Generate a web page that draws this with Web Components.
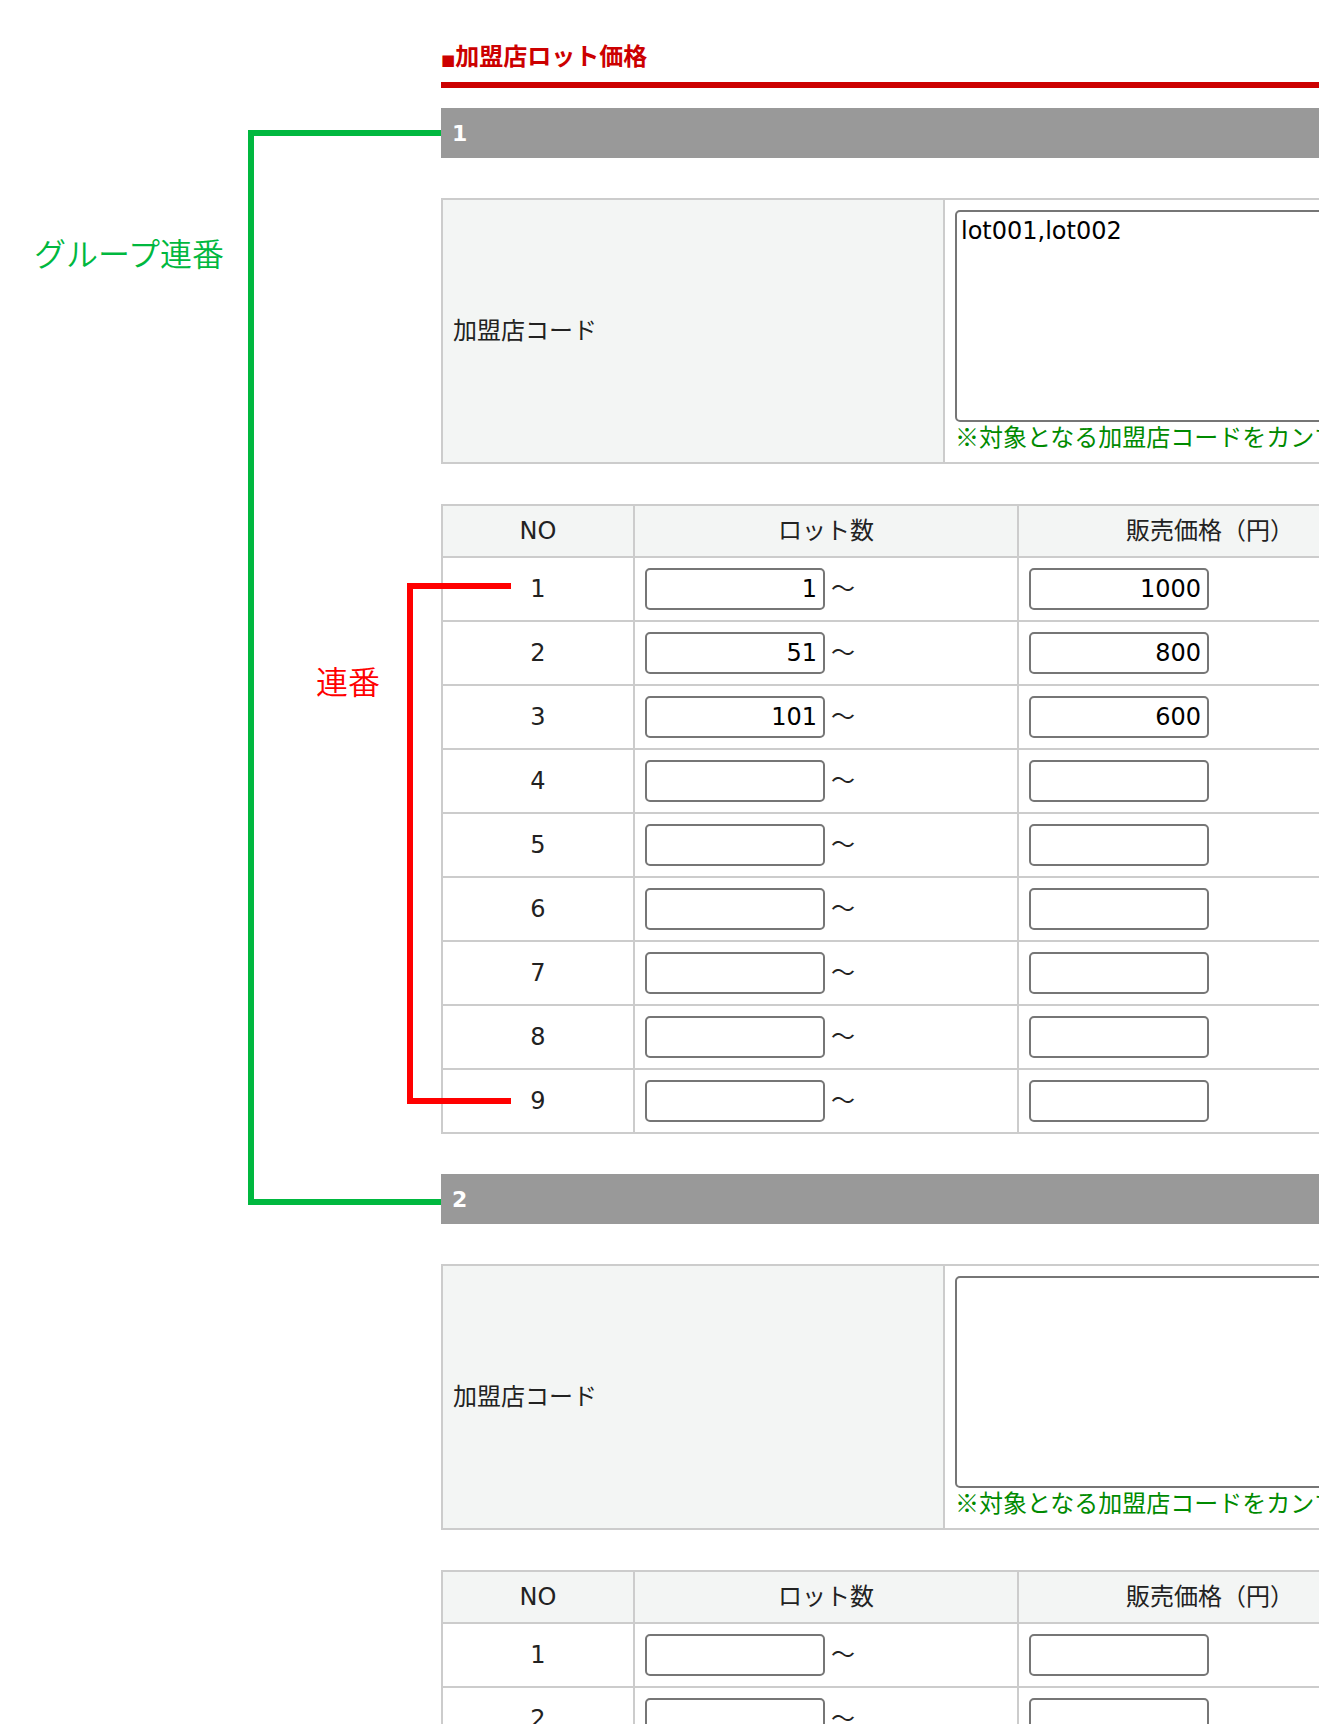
<!DOCTYPE html>
<html lang="ja">
<head>
<meta charset="utf-8">
<title>加盟店ロット価格</title>
<style>
  html, body { margin: 0; background: #fff; }
  body { height: 100vh; overflow: hidden; }
</style>
</head>
<body>
<lot-page></lot-page>

<script>
const define = (name, html) => customElements.define(name, class extends HTMLElement {
  connectedCallback() {
    if (this.shadowRoot) return;
    const root = this.attachShadow({ mode: 'open' });
    root.innerHTML = typeof html === 'function' ? html(this) : html;
  }
});

const tableCss = `
  * { box-sizing: border-box; }
  :host { display: block; position: relative; }
  table { width: 100%; border-collapse: collapse; table-layout: fixed; }
  th, td { border: 2px solid #ccc; padding: 10px; font-weight: 400; }
  th { background: #f3f5f4; }
  input, textarea {
    font: inherit; color: #000; background: #fff; margin: 0;
    border: 2px solid #767676; border-radius: 5px;
  }
`;

/* Red page title with its rule */
define('page-title', `
  <style>
    :host { display: block; }
    h1 { margin: 0; padding: 0 0 10px; border-bottom: 6px solid #c00; color: #c00; font-size: 24px; line-height: 30px; }
    span { font-size: 15px; line-height: 15px; }
  </style>
  <h1><span>■</span><slot></slot></h1>`);

/* Grey bar that opens a group */
define('group-bar', `
  <style>
    :host { display: block; background: #999; color: #fff; }
    h2 { margin: 0; padding: 11px 11px 9px; font-size: 22px; line-height: 30px; }
  </style>
  <h2><slot></slot></h2>`);

/* Member code row: label and text area */
define('code-field', el => `
  <style>${tableCss}
    .name { width: 502px; }
    th { text-align: left; }
    textarea { display: block; width: 100%; height: 212px; padding: 4px; resize: none; }
    p { margin: 0; padding-bottom: 2px; line-height: 28px; color: #008a00; white-space: nowrap; font-family: "Noto Sans CJK JP", sans-serif; }
  </style>
  <table>
    <colgroup><col class="name"><col></colgroup>
    <tbody><tr>
      <th scope="row"><label for="codes">加盟店コード</label></th>
      <td><textarea id="codes">${el.getAttribute('value') || ''}</textarea><p>※対象となる加盟店コードをカンマ</p></td>
    </tr></tbody>
  </table>`);

/* Lot quantities and prices; rows="count", values="lot:price,..." */
define('lot-table', el => {
  const values = (el.getAttribute('values') || '').split(',').map(v => v.split(':'));
  const rows = Array.from({ length: Number(el.getAttribute('rows')) }, (_, i) => {
    const [lot = '', price = ''] = values[i] || [];
    return `<tr>
      <td class="no">${i + 1}</td>
      <td><div><input type="text" aria-label="ロット数 ${i + 1}" value="${lot}"><span>〜</span></div></td>
      <td><div><input type="text" aria-label="販売価格 ${i + 1}" value="${price}"></div></td>
    </tr>`;
  }).join('');
  return `
  <style>${tableCss}
    .c1 { width: 20%; }
    .c2 { width: 40%; }
    .no { text-align: center; }
    div { display: flex; align-items: center; gap: 6px; }
    input { width: 180px; height: 42px; padding: 0 6px; text-align: right; }
  </style>
  <table>
    <colgroup><col class="c1"><col class="c2"><col class="c2"></colgroup>
    <thead><tr><th scope="col">NO</th><th scope="col">ロット数</th><th scope="col">販売価格（円）</th></tr></thead>
    <tbody>${rows}</tbody>
  </table>
  <slot></slot>`;
});

/* Caption with a square bracket opening to the right; --drop lowers the caption */
define('range-bracket', `
  <style>
    :host { display: flex; align-items: stretch; box-sizing: border-box; }
    span { margin-top: var(--drop, 0); font-size: 32px; line-height: 40px; font-weight: 350; white-space: nowrap; font-family: "Noto Sans CJK JP", sans-serif; }
    i { flex: 1; border: 6px solid currentColor; border-right: 0; }
  </style>
  <span><slot></slot></span><i></i>`);

define('lot-page', `
  <style>
    :host {
      display: grid; grid-template-columns: 441px minmax(962px, 1fr);
      font: 24px/30px "DejaVu Sans", "Noto Sans CJK JP", sans-serif; color: #222;
    }
    aside { padding: 130px 0 0 34px; }
    aside range-bracket { --drop: 102px; gap: 24px; height: 1075px; color: #00b83f; }
    main { padding-top: 42px; }
    page-title { margin-bottom: 20px; }
    section { display: flex; flex-direction: column; gap: 40px; margin-bottom: 40px; }
    .rows { --drop: 77px; position: absolute; left: -125px; top: 79px; width: 195px; height: 521px; gap: 27px; color: #f00; }
  </style>
  <aside><range-bracket>グループ連番</range-bracket></aside>
  <main>
    <page-title>加盟店ロット価格</page-title>
    <section>
      <group-bar>1</group-bar>
      <code-field value="lot001,lot002"></code-field>
      <lot-table rows="9" values="1:1000,51:800,101:600"><range-bracket class="rows">連番</range-bracket></lot-table>
    </section>
    <section>
      <group-bar>2</group-bar>
      <code-field></code-field>
      <lot-table rows="2"></lot-table>
    </section>
  </main>`);
</script>
</body>
</html>
